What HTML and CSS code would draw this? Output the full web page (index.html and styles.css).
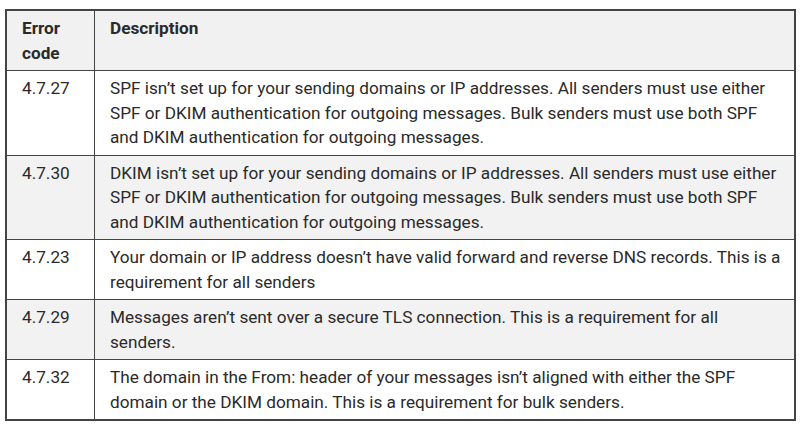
FILE: index.html
```html
<!DOCTYPE html>
<html>
<head>
<meta charset="utf-8">
<link rel="stylesheet" href="styles.css">
</head>
<body>
<table class="codes">
  <thead>
    <tr><th class="code">Error code</th><th>Description</th></tr>
  </thead>
  <tbody>
    <tr><td class="code">4.7.27</td><td>SPF isn’t set up for your sending domains or IP addresses. All senders must use either SPF or DKIM authentication for outgoing messages. Bulk senders must use both SPF and DKIM authentication for outgoing messages.</td></tr>
    <tr class="alt"><td class="code">4.7.30</td><td>DKIM isn’t set up for your sending domains or IP addresses. All senders must use either SPF or DKIM authentication for outgoing messages. Bulk senders must use both SPF and DKIM authentication for outgoing messages.</td></tr>
    <tr><td class="code">4.7.23</td><td>Your domain or IP address doesn’t have valid forward and reverse DNS records. This is a requirement for all senders</td></tr>
    <tr class="alt"><td class="code">4.7.29</td><td>Messages aren’t sent over a secure TLS connection. This is a requirement for all senders.</td></tr>
    <tr><td class="code">4.7.32</td><td>The domain in the From: header of your messages isn’t aligned with either the SPF domain or the DKIM domain. This is a requirement for bulk senders.</td></tr>
  </tbody>
</table>
</body>
</html>
```
FILE: styles.css
```css
html, body {
  margin: 0;
  background: #ffffff;
}
body {
  font-family: Roboto, "Noto Sans", sans-serif;
  font-size: 17.2px;
  color: #2a2a2a;
}
.codes {
  margin: 9px 0 0 5px;
  width: 791px;
  border-collapse: collapse;
  border: 2px solid #444444;
}
.codes th, .codes td {
  border: 1.5px solid #444444;
  padding: 5px 8px 5px 15px;
  line-height: 24.5px;
  text-align: left;
  vertical-align: top;
}
.codes th {
  font-weight: 700;
  background: #f1f1f1;
}
.codes .code {
  width: 64px;
}
.codes tr.alt td {
  background: #f2f2f2;
}
```
